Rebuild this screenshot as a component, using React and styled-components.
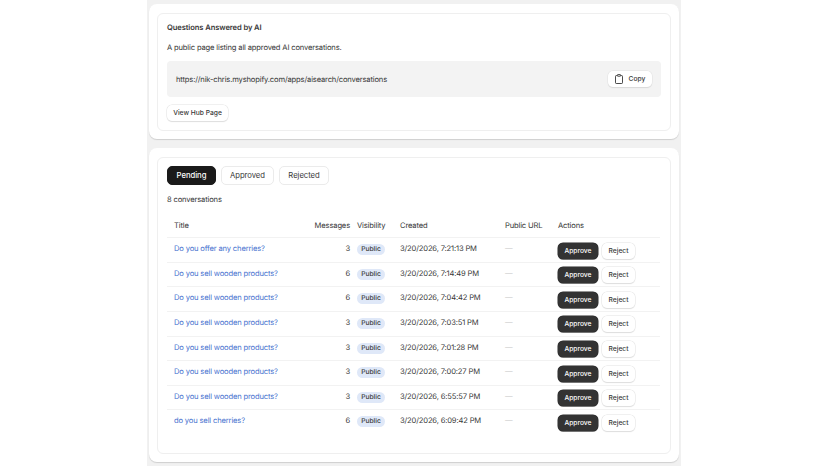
import React from "react";
import styled, { createGlobalStyle } from "styled-components";

const GlobalStyle = createGlobalStyle`
  html, body {
    margin: 0;
    padding: 0;
    background: #fff;
    font-family: Inter, "Liberation Sans", sans-serif;
    color: #383838;
    text-rendering: geometricPrecision;
    -webkit-font-smoothing: antialiased;
  }
`;

const Page = styled.div`
  width: 534px;
  height: 466px;
  margin: 0 auto;
  padding: 4px 2px 0;
  box-sizing: border-box;
  background: #f1f1f1;
  display: flex;
  flex-direction: column;
  gap: 9px;
  overflow: hidden;
`;

const OuterCard = styled.section`
  background: #fff;
  border-radius: 8px;
  padding: 9px 8px 8px;
  box-shadow: 0 1px 1px rgba(0, 0, 0, 0.14);
  height: ${(p) => p.$height}px;
  box-sizing: border-box;
`;

const InnerCard = styled.div`
  height: 100%;
  box-sizing: border-box;
  border: 1px solid #efefef;
  border-radius: 6px;
  padding: ${(p) => p.$padding};
`;

const Heading = styled.h2`
  margin: 0;
  font-size: 7.6px;
  letter-spacing: -0.1px;
  line-height: 13px;
  font-weight: 600;
  color: #383838;
`;

const Description = styled.p`
  margin: 7px 0 0;
  font-size: 7.6px;
  letter-spacing: -0.16px;
  line-height: 13px;
`;

const UrlBox = styled.div`
  margin-top: 7px;
  height: 36px;
  box-sizing: border-box;
  padding: 0 9px;
  background: #f3f3f3;
  border-radius: 4px;
  display: flex;
  align-items: center;
  justify-content: space-between;
  font-size: 7.6px;
  letter-spacing: -0.16px;
`;

const Button = styled.button`
  font-family: inherit;
  font-size: 6.7px;
  font-weight: 500;
  color: #383838;
  background: #fff;
  border: 0;
  border-radius: 5px;
  height: 16px;
  padding: 0 7px;
  display: inline-flex;
  align-items: center;
  box-shadow: 0 0 0 0.5px #e2e2e2, 0 1px 1px rgba(0, 0, 0, 0.14);
`;

const CopyButton = styled(Button)`
  width: 44px;
  gap: 6px;
  justify-content: center;
  padding: 0;
`;

const HubButton = styled(Button)`
  margin-top: 8px;
  width: 61px;
  justify-content: center;
  padding: 0;
`;

const Tabs = styled.div`
  display: flex;
  gap: 5px;
`;

const Tab = styled.button`
  font-family: inherit;
  font-size: 7.7px;
  letter-spacing: -0.05px;
  font-weight: ${(p) => (p.$active ? 500 : 400)};
  height: 19px;
  width: ${(p) => p.$width}px;
  padding: 0;
  border-radius: 5px;
  border: 1px solid ${(p) => (p.$active ? "#1a1a1a" : "#ebebeb")};
  background: ${(p) => (p.$active ? "#1a1a1a" : "#fff")};
  color: ${(p) => (p.$active ? "#fff" : "#383838")};
`;

const Count = styled.div`
  margin-top: 8px;
  font-size: 7.6px;
  letter-spacing: -0.16px;
  line-height: 13px;
`;

const Table = styled.table`
  margin-top: 7px;
  width: 493px;
  table-layout: fixed;
  border-collapse: collapse;
  font-size: 7.6px;
  letter-spacing: -0.16px;
`;

const HeadCell = styled.th`
  height: 24px;
  padding: 0 0 0 ${(p) => p.$pad ?? 7}px;
  font-weight: 400;
  text-align: ${(p) => p.$align || "left"};
  border-bottom: 1px solid #f2f2f2;
`;

const Row = styled.tr`
  height: 24.65px;
  border-bottom: 1px solid #f2f2f2;
  &:last-child {
    border-bottom: 0;
  }
`;

const Cell = styled.td`
  padding: ${(p) => p.$top ?? 5}px 0 0 ${(p) => p.$pad ?? 7}px;
  vertical-align: top;
  line-height: 11px;
  white-space: nowrap;
  text-align: ${(p) => p.$align || "left"};
  color: ${(p) => p.$color || "#383838"};
`;

const TitleLink = styled.a`
  color: #4a74cf;
  text-decoration: none;
`;

const Badge = styled.span`
  display: inline-block;
  width: 28px;
  text-align: center;
  line-height: 11px;
  font-size: 6.7px;
  letter-spacing: 0;
  font-weight: 500;
  background: #dfe8f8;
  border-radius: 6px;
`;

const Actions = styled.div`
  display: flex;
  gap: 4px;
`;

const ApproveButton = styled(Button)`
  width: 40px;
  justify-content: center;
  padding: 0;
  color: #fff;
  background: #333;
  box-shadow: 0 0 0 0.5px #2a2a2a, 0 1px 0 rgba(0, 0, 0, 0.25);
`;

const RejectButton = styled(Button)`
  width: 33px;
  justify-content: center;
  padding: 0;
`;

const conversations = [
  ["Do you offer any cherries?", 3, "3/20/2026, 7:21:13 PM"],
  ["Do you sell wooden products?", 6, "3/20/2026, 7:14:49 PM"],
  ["Do you sell wooden products?", 6, "3/20/2026, 7:04:42 PM"],
  ["Do you sell wooden products?", 3, "3/20/2026, 7:03:51 PM"],
  ["Do you sell wooden products?", 3, "3/20/2026, 7:01:28 PM"],
  ["Do you sell wooden products?", 3, "3/20/2026, 7:00:27 PM"],
  ["Do you sell wooden products?", 3, "3/20/2026, 6:55:57 PM"],
  ["do you sell cherries?", 6, "3/20/2026, 6:09:42 PM"],
];

const ClipboardIcon = () => (
  <svg width="8" height="10" viewBox="0 0 8 10" fill="none" stroke="#383838" strokeWidth="0.9">
    <path d="M2.2 1.6H1.2a.7.7 0 0 0-.7.7v6.5c0 .4.3.7.7.7h5.6c.4 0 .7-.3.7-.7V2.3a.7.7 0 0 0-.7-.7h-1" />
    <rect x="2.4" y="0.6" width="3.2" height="1.6" rx="0.4" />
  </svg>
);

export default function App() {
  return (
    <>
      <GlobalStyle />
      <Page>
        <OuterCard $height={135}>
          <InnerCard $padding="7px 9px">
            <Heading>Questions Answered by AI</Heading>
            <Description>A public page listing all approved AI conversations.</Description>
            <UrlBox>
              <span>https://nik-chris.myshopify.com/apps/aisearch/conversations</span>
              <CopyButton>
                <ClipboardIcon />
                Copy
              </CopyButton>
            </UrlBox>
            <HubButton>View Hub Page</HubButton>
          </InnerCard>
        </OuterCard>
        <OuterCard $height={314}>
          <InnerCard $padding="8px 9px">
            <Tabs>
              <Tab $active $width={49}>Pending</Tab>
              <Tab $width={53}>Approved</Tab>
              <Tab $width={50}>Rejected</Tab>
            </Tabs>
            <Count>8 conversations</Count>
            <Table>
              <colgroup>
                <col width="139" />
                <col width="44" />
                <col width="43" />
                <col width="105" />
                <col width="53" />
                <col width="109" />
              </colgroup>
              <thead>
                <tr>
                  <HeadCell>Title</HeadCell>
                  <HeadCell $align="right" $pad={0}>Messages</HeadCell>
                  <HeadCell>Visibility</HeadCell>
                  <HeadCell>Created</HeadCell>
                  <HeadCell>Public URL</HeadCell>
                  <HeadCell>Actions</HeadCell>
                </tr>
              </thead>
              <tbody>
                {conversations.map(([title, messages, created], i) => (
                  <Row key={i}>
                    <Cell><TitleLink href="#">{title}</TitleLink></Cell>
                    <Cell $align="right" $pad={0}>{messages}</Cell>
                    <Cell><Badge>Public</Badge></Cell>
                    <Cell>{created}</Cell>
                    <Cell $color="#cfcfcf">—</Cell>
                    <Cell $top={4.5}>
                      <Actions>
                        <ApproveButton>Approve</ApproveButton>
                        <RejectButton>Reject</RejectButton>
                      </Actions>
                    </Cell>
                  </Row>
                ))}
              </tbody>
            </Table>
          </InnerCard>
        </OuterCard>
      </Page>
    </>
  );
}
